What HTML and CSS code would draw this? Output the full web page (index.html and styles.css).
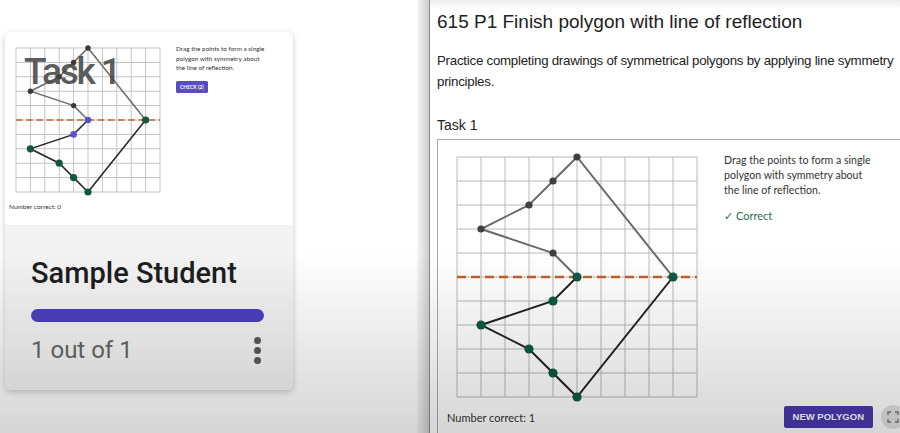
FILE: index.html
```html
<!DOCTYPE html>
<html>
<head>
    <meta charset="utf-8">
    <title>615 P1 Finish polygon with line of reflection</title>
    <link rel="stylesheet" href="styles.css">
</head>
<body>
<div class="page">
    <div class="side">
        <div class="card">
            <div class="card-top">
                <div class="mini">
                    <svg class="mini-grid" width="144" height="144" viewBox="0 0 240 240">
                        <path d="M0 0V240M24 0V240M48 0V240M72 0V240M96 0V240M120 0V240M144 0V240M168 0V240M192 0V240M216 0V240M240 0V240M0 0H240M0 24H240M0 48H240M0 72H240M0 96H240M0 120H240M0 144H240M0 168H240M0 192H240M0 216H240M0 240H240" stroke="#c4c4c4" stroke-width="1.7" fill="none"/>
                        <line x1="0" y1="120" x2="240" y2="120" stroke="#c0662e" stroke-width="2.6" stroke-dasharray="11 6"/>
                        <polyline points="216,120 120,0 96,24 72,48 24,72 96,96 120,120" fill="none" stroke="#707070" stroke-width="2.6"/>
                        <polyline points="120,120 96,144 24,168 72,192 96,216 120,240 216,120" fill="none" stroke="#2a2a2a" stroke-width="2.6"/>
                        <g fill="#3a3a3a">
                            <circle cx="120" cy="0" r="4.5"/><circle cx="96" cy="24" r="4.5"/><circle cx="72" cy="48" r="4.5"/><circle cx="24" cy="72" r="4.5"/><circle cx="96" cy="96" r="4.5"/>
                        </g>
                        <g fill="#5b4fd2">
                            <circle cx="120" cy="120" r="5.5"/><circle cx="96" cy="144" r="5.5"/>
                        </g>
                        <g fill="#11583f">
                            <circle cx="24" cy="168" r="6"/><circle cx="72" cy="192" r="6"/><circle cx="96" cy="216" r="6"/><circle cx="120" cy="240" r="6"/><circle cx="216" cy="120" r="6"/>
                        </g>
                    </svg>
                    <div class="mini-side">
                        <p>Drag the points to form a single polygon with symmetry about the line of reflection.</p>
                        <span class="mini-check">CHECK (2)</span>
                    </div>
                </div>
                <div class="mini-count">Number correct: 0</div>
                <div class="card-title">Task 1</div>
            </div>
            <div class="card-bottom">
                <div class="student">Sample Student</div>
                <div class="bar"></div>
                <div class="score-row">
                    <span class="score">1 out of 1</span>
                    <span class="kebab"><i></i><i></i><i></i></span>
                </div>
            </div>
        </div>
    </div>
    <div class="divider"></div>
    <div class="main">
        <h1>615 P1 Finish polygon with line of reflection</h1>
        <p class="intro">Practice completing drawings of symmetrical polygons by applying line symmetry principles.</p>
        <h2>Task 1</h2>
        <div class="task">
            <div class="task-body">
                <svg class="grid" width="240" height="240" viewBox="0 0 240 240">
                    <path d="M0 0V240M24 0V240M48 0V240M72 0V240M96 0V240M120 0V240M144 0V240M168 0V240M192 0V240M216 0V240M240 0V240M0 0H240M0 24H240M0 48H240M0 72H240M0 96H240M0 120H240M0 144H240M0 168H240M0 192H240M0 216H240M0 240H240" stroke="#b9b9b9" stroke-width="1" fill="none"/>
                    <line x1="0" y1="120" x2="240" y2="120" stroke="#bf622c" stroke-width="2.4" stroke-dasharray="9 5"/>
                    <polyline points="216,120 120,0 96,24 72,48 24,72 96,96 120,120" fill="none" stroke="#6a6a6a" stroke-width="2"/>
                    <polyline points="120,120 96,144 24,168 72,192 96,216 120,240 216,120" fill="none" stroke="#222" stroke-width="2"/>
                    <g fill="#404040">
                        <circle cx="120" cy="0" r="3.6"/><circle cx="96" cy="24" r="3.6"/><circle cx="72" cy="48" r="3.6"/><circle cx="24" cy="72" r="3.6"/><circle cx="96" cy="96" r="3.6"/>
                    </g>
                    <g fill="#0e5a42">
                        <circle cx="120" cy="120" r="4.6"/><circle cx="96" cy="144" r="4.6"/><circle cx="24" cy="168" r="4.6"/><circle cx="72" cy="192" r="4.6"/><circle cx="96" cy="216" r="4.6"/><circle cx="120" cy="240" r="4.6"/><circle cx="216" cy="120" r="4.6"/>
                    </g>
                </svg>
                <div class="task-side">
                    <p>Drag the points to form a single polygon with symmetry about the line of reflection.</p>
                    <div class="correct">✓ Correct</div>
                </div>
            </div>
            <div class="task-foot">
                <span class="count">Number correct: 1</span>
                <span class="new-btn">NEW POLYGON</span>
                <span class="fs">
                    <svg width="12" height="12" viewBox="0 0 12 12" fill="none" stroke="#777" stroke-width="1.4">
                        <path d="M1 4V1H4M8 1H11V4M11 8V11H8M4 11H1V8"/>
                    </svg>
                </span>
            </div>
        </div>
    </div>
</div>
<div class="vignette"></div>
</body>
</html>
```

FILE: styles.css
```css
* {margin:0; padding:0; box-sizing:border-box}
body {width:900px; height:433px; overflow:hidden; background:#fff; font-family:"Liberation Sans", Arial, sans-serif; color:#222}
.page {display:flex; height:433px}

/* left: student card */
.side {width:417px; flex:none; padding:32px 0 0 5px}
.card {position:relative; width:288px; height:358px; border-radius:6px; background:#fff; box-shadow:0 2px 6px rgba(0,0,0,0.22); overflow:hidden; display:flex; flex-direction:column}
.card-top {height:193px; padding:16px 0 0 11px; font-family:Lato, "DejaVu Sans", sans-serif; color:#333}
.mini {display:flex; gap:16px}
.mini-grid {flex:none; overflow:visible}
.mini-side {width:94px; margin-top:-4px}
.mini-side p {font-size:6.4px; line-height:9.5px}
.mini-check {display:inline-block; margin-top:8px; padding:0 4px; height:12px; line-height:12px; background:#5a49c9; color:#fff; font-size:5px; font-weight:bold; border-radius:1.5px}
.mini-count {margin:11px 0 0 -7px; font-size:6.5px}
.card-title {position:absolute; left:19px; top:21px; font-family:Roboto, sans-serif; font-weight:500; font-size:37px; line-height:1; letter-spacing:-2.2px; color:rgba(70,70,70,0.9)}
.card-bottom {flex:1; padding:34px 29px 0 26px; background:#f3f3f3}
.student {font-family:Roboto, sans-serif; font-weight:500; font-size:29px; line-height:1; color:#1e1e1e}
.bar {margin-top:21px; height:13px; border-radius:7px; background:#4c40bf}
.score-row {display:flex; justify-content:space-between; align-items:center; margin-top:11px; padding-right:3px}
.score {font-family:Roboto, sans-serif; font-size:24px; line-height:34px; color:#666}
.kebab {display:flex; flex-direction:column; gap:3px}
.kebab i {display:block; width:7px; height:7px; border-radius:50%; background:#5a5a5a}

.divider {width:13px; flex:none; background:linear-gradient(to right, #f6f6f6, #cdcdcd); border-right:1px solid #8d8d8d}

/* right: task page */
.main {flex:1; padding:10px 0 0 7px; background:linear-gradient(#ececec, #fff 9px)}
h1 {font-size:19px; font-weight:normal; line-height:24px; color:#222}
.intro {margin-top:16px; font-size:13.3px; line-height:21px; letter-spacing:-0.25px; color:#222}
h2 {margin-top:23px; font-size:14px; font-weight:normal; line-height:20px}
.task {margin-top:4px; width:468px; height:300px; border:1px solid #a9a9a9; border-right:none; font-family:Lato, "DejaVu Sans", sans-serif; color:#333}
.task-body {display:flex; padding:13px 0 0 19px}
.grid {flex:none; margin-top:4px; overflow:visible}
.task-side {margin-left:27px; width:152px}
.task-side p {font-size:10.6px; line-height:15px}
.correct {margin-top:10px; font-size:11px; line-height:15px; color:#2e6b50}
.task-foot {display:flex; align-items:center; margin-top:9px; padding-left:9px; height:22px}
.count {font-size:11px}
.new-btn {margin-left:auto; height:22px; line-height:22px; padding:0 9px; background:#4a3aae; color:#fff; font-family:"Liberation Sans", Arial, sans-serif; font-size:9.5px; font-weight:bold; border-radius:2px}
.fs {display:flex; align-items:center; justify-content:center; margin-left:8px; width:24px; height:24px; border-radius:50%; background:#e2e2e2}

.vignette {position:fixed; left:0; top:0; width:900px; height:433px; pointer-events:none; background:linear-gradient(to bottom, rgba(0,0,0,0) 58%, rgba(0,0,0,0.16) 100%)}
```
